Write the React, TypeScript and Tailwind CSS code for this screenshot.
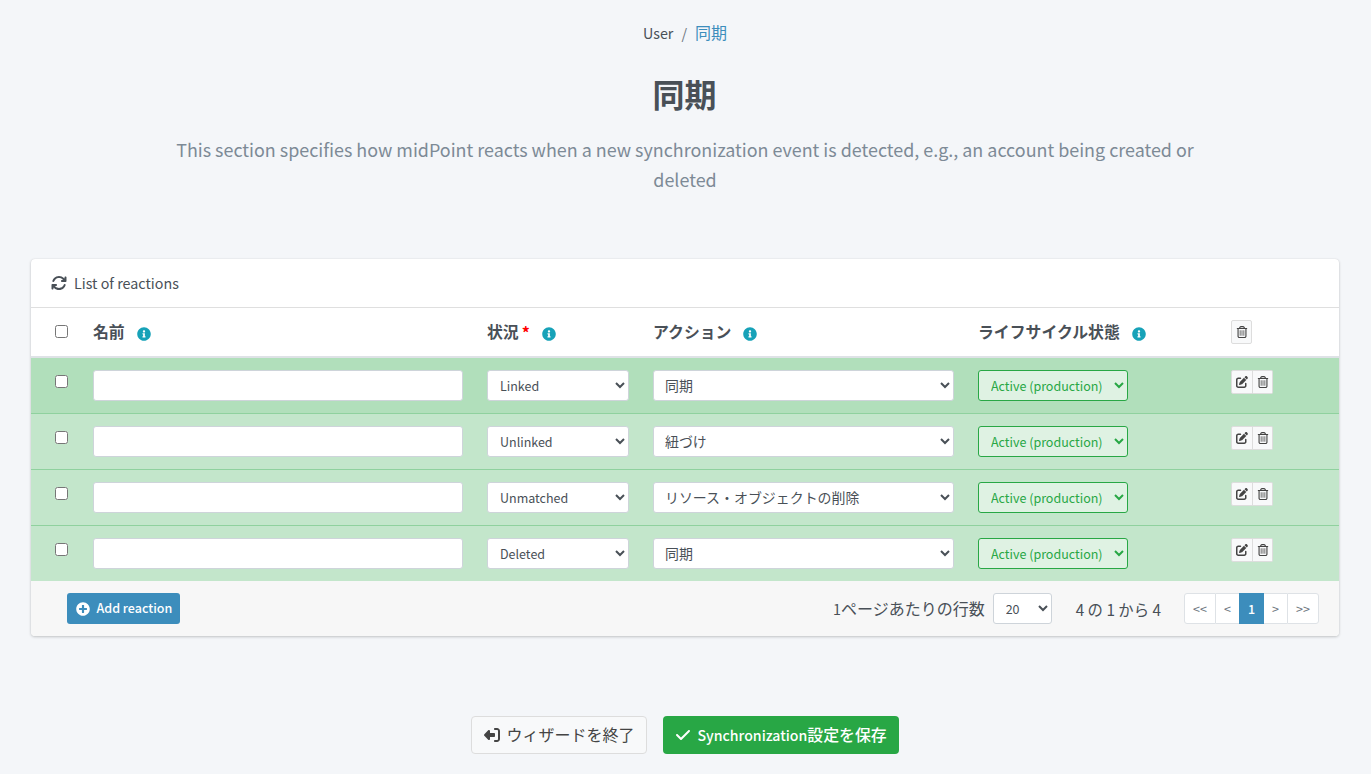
import type { ReactNode } from "react";
import clsx from "clsx";
import { FaInfoCircle, FaPlusCircle } from "react-icons/fa";
import { FaArrowsRotate, FaCheck, FaPenToSquare, FaRegTrashCan, FaRightFromBracket } from "react-icons/fa6";

interface Reaction {
  id: number;
  situation: string;
  action: string;
}

const reactions: Reaction[] = [
  { id: 1, situation: "Linked", action: "同期" },
  { id: 2, situation: "Unlinked", action: "紐づけ" },
  { id: 3, situation: "Unmatched", action: "リソース・オブジェクトの削除" },
  { id: 4, situation: "Deleted", action: "同期" },
];

const ROW_GRID = "grid grid-cols-[50px_394px_166px_325px_253px_120px]";

function HeaderCell({ label, required }: { label: string; required?: boolean }) {
  return (
    <div className="flex h-12 items-center px-3 text-[15.85px] font-bold">
      <span>{label}</span>
      {required && <span className="ml-[3px] text-[16px] text-[#ff0000]">*</span>}
      <FaInfoCircle className="mt-1 ml-3 size-[14px] text-[#17a2b8]" />
    </div>
  );
}

function Select({ value, className }: { value: string; className?: string }) {
  return (
    <select
      defaultValue={value}
      className={clsx("h-[31px] rounded-[3px] border px-2 leading-[21px]", className)}
    >
      <option>{value}</option>
    </select>
  );
}

function IconButton({ title, className, children }: { title: string; className?: string; children: ReactNode }) {
  return (
    <button
      type="button"
      title={title}
      className={clsx("flex h-6 items-center justify-center border border-[#ddd] bg-[#f8f9fa] text-[#444]", className)}
    >
      {children}
    </button>
  );
}

function ReactionRow({ reaction, active }: { reaction: Reaction; active: boolean }) {
  return (
    <div
      className={clsx(
        ROW_GRID,
        active ? "h-[55px] bg-[#b1dfbb]" : "h-14 border-t border-[#8fd19e] bg-[#c3e6cb]",
      )}
    >
      <div className="pt-[17px] pl-6">
        <input type="checkbox" className="block size-[13px]" />
      </div>
      <div className="px-3 pt-3">
        <input type="text" className="h-[31px] w-full rounded-[3px] border border-[#ced4da] bg-white px-2" />
      </div>
      <div className="px-3 pt-3">
        <Select value={reaction.situation} className="w-full border-[#ced4da] bg-white text-[12.5px]" />
      </div>
      <div className="px-3 pt-3">
        <Select value={reaction.action} className="w-full border-[#ced4da] bg-white pb-0.5 pl-[7px] text-[13.95px]" />
      </div>
      <div className="px-3 pt-3">
        <Select
          value="Active (production)"
          className="w-[150px] border-[#28a745] bg-[#dff2e3] text-[12.5px] text-[#28a745]"
        />
      </div>
      <div className="flex px-3 pt-3">
        <IconButton title="Edit" className="w-[22px] rounded-l-[2px]">
          <FaPenToSquare className="size-3" />
        </IconButton>
        <IconButton title="Delete" className="w-5 rounded-r-[2px] border-l-0">
          <FaRegTrashCan className="size-3" />
        </IconButton>
      </div>
    </div>
  );
}

function Pagination() {
  return (
    <div className="flex h-[31px] text-[12.5px] leading-[29px] text-[#6c757d]">
      <a className="w-8 rounded-l-[3px] border border-[#dee2e6] bg-white text-center">&lt;&lt;</a>
      <a className="w-[23px] border-y border-[#dee2e6] bg-white text-center">&lt;</a>
      <a className="w-[25px] border border-[#3c8dbc] bg-[#3c8dbc] text-center font-medium text-white">1</a>
      <a className="w-[23px] border-y border-[#dee2e6] bg-white text-center">&gt;</a>
      <a className="w-8 rounded-r-[3px] border border-[#dee2e6] bg-white text-center">&gt;&gt;</a>
    </div>
  );
}

export default function App() {
  return (
    <div className="h-[774px] overflow-hidden bg-[#f4f6f9] font-['Noto_Sans_CJK_JP',sans-serif] text-[#495057]">
      <nav className="flex h-[66px] items-center justify-center pr-px text-[14.3px]">
        <span>User</span>
        <span className="px-2 text-[#6c757d]">/</span>
        <a className="mb-0.5 text-base leading-6 text-[#3c8dbc]">同期</a>
      </nav>

      <h1 className="mt-[7px] pr-0.5 text-center text-[32px] leading-10 font-bold">同期</h1>
      <p className="mt-[21px] ml-[165px] w-[1040px] text-center text-[17.92px] leading-[30px] text-[#7d8a96]">
        This section specifies how midPoint reacts when a new synchronization event is detected, e.g., an account being
        created or deleted
      </p>

      <section className="mt-[65px] ml-[31px] w-[1308px] overflow-hidden rounded bg-white shadow-[0_0_1px_rgba(0,0,0,0.13),0_1px_3px_rgba(0,0,0,0.2)]">
        <header className="flex h-[49px] items-center border-b border-[#dfdfdf] px-5 text-[14.3px]">
          <FaArrowsRotate className="size-4" />
          <h3 className="ml-[7px]">List of reactions</h3>
        </header>

        <div className={clsx(ROW_GRID, "h-[50px] border-b-2 border-[#dee2e6]")}>
          <div className="pt-[17px] pl-6">
            <input type="checkbox" className="block size-[13px]" />
          </div>
          <HeaderCell label="名前" />
          <HeaderCell label="状況" required />
          <HeaderCell label="アクション" />
          <HeaderCell label="ライフサイクル状態" />
          <div className="px-3 pt-3">
            <IconButton title="Delete" className="w-[21px] rounded-[2px]">
              <FaRegTrashCan className="size-3" />
            </IconButton>
          </div>
        </div>

        {reactions.map((r, i) => (
          <ReactionRow key={r.id} reaction={r} active={i === 0} />
        ))}

        <footer className="flex h-[55px] items-center bg-[#f7f7f7] pr-5 pl-9">
          <button
            type="button"
            className="flex h-[31px] w-[113px] items-center rounded-[3px] bg-[#3c8dbc] pl-[9px] text-[12.5px] font-medium text-white"
          >
            <FaPlusCircle className="mr-[6.5px] size-[14px]" />
            Add reaction
          </button>
          <div className="ml-auto flex items-center">
            <span className="mr-2 mb-0.5 text-base">
              <span className="text-[14.3px]">1</span>ページあたりの行数
            </span>
            <Select value="20" className="w-[59px] border-[#ced4da] bg-white text-[12.5px]" />
            <span className="mt-0.5 mr-[23px] ml-6 text-[15.35px]">4 の 1 から 4</span>
            <Pagination />
          </div>
        </footer>
      </section>

      <div className="mt-20 flex justify-center gap-4 pr-0.5 text-base">
        <button
          type="button"
          className="flex h-[38px] w-44 items-center rounded border border-[#ddd] bg-[#f8f9fa] pb-0.5 pl-3 text-[#444]"
        >
          <FaRightFromBracket className="mt-0.5 mr-[7px] size-4 -scale-x-100" />
          ウィザードを終了
        </button>
        <button
          type="button"
          className="flex h-[38px] w-[236px] items-center rounded bg-[#28a745] pl-3 font-medium text-white"
        >
          <FaCheck className="mr-[7px] size-4" />
          <span className="mt-px text-[14.1px]">Synchronization</span>
          <span className="text-[15.9px]">設定を保存</span>
        </button>
      </div>
    </div>
  );
}
